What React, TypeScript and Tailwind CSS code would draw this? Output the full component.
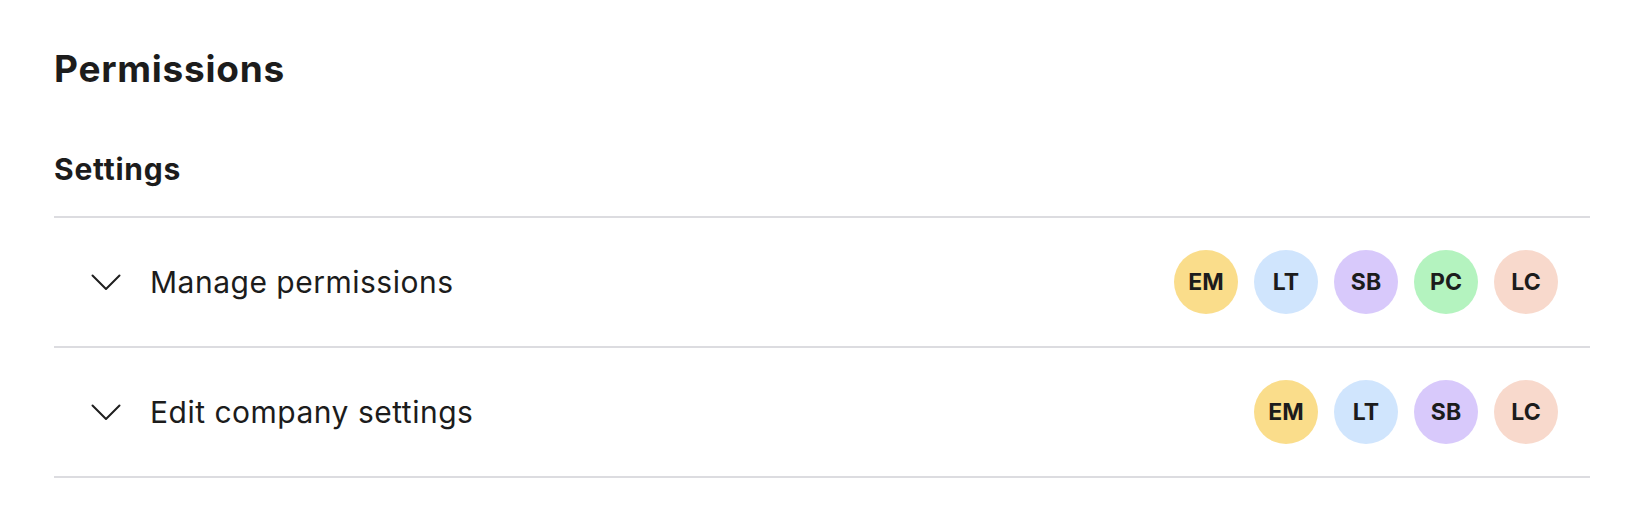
const rows = [
  { label: 'Manage permissions', people: ['EM', 'LT', 'SB', 'PC', 'LC'] },
  { label: 'Edit company settings', people: ['EM', 'LT', 'SB', 'LC'] },
]

const avatarColor: Record<string, string> = {
  EM: 'bg-[#fadd8b]',
  LT: 'bg-[#d0e5fd]',
  SB: 'bg-[#d8c9fb]',
  PC: 'bg-[#b4f3bf]',
  LC: 'bg-[#f8d9cc]',
}

function Chevron() {
  return (
    <svg className="w-[30px] h-[17px] shrink-0" viewBox="0 0 30 17" fill="none" stroke="#1f1f1f">
      <path d="M1.5 1.5l13.5 13.5l13.5-13.5" strokeWidth={2} strokeLinecap="round" strokeLinejoin="round" />
    </svg>
  )
}

export default function App() {
  return (
    <div className="min-h-screen bg-white pl-[54px] pr-[52px] pt-[47px] font-['Inter',sans-serif] text-[#1c1c1c]">
      <h1 className="text-[37px] leading-[44px] font-bold tracking-[0.75px]">Permissions</h1>
      <h2 className="mt-[60px] text-[30px] leading-[36px] font-bold tracking-[0.75px]">Settings</h2>

      <div className="mt-[29px] border-t-2 border-[#dcdce0]">
        {rows.map((row) => (
          <div
            key={row.label}
            className="flex h-[130px] items-center border-b-2 border-[#dcdce0] pl-[37px] pr-[32px]"
          >
            <Chevron />
            <span className="ml-[29px] text-[30px] leading-[36px] tracking-[0.5px]">{row.label}</span>
            <div className="ml-auto flex gap-4">
              {row.people.map((p) => (
                <div
                  key={p}
                  className={`flex h-16 w-16 items-center justify-center rounded-full text-[23px] font-bold ${avatarColor[p]}`}
                >
                  {p}
                </div>
              ))}
            </div>
          </div>
        ))}
      </div>
    </div>
  )
}
